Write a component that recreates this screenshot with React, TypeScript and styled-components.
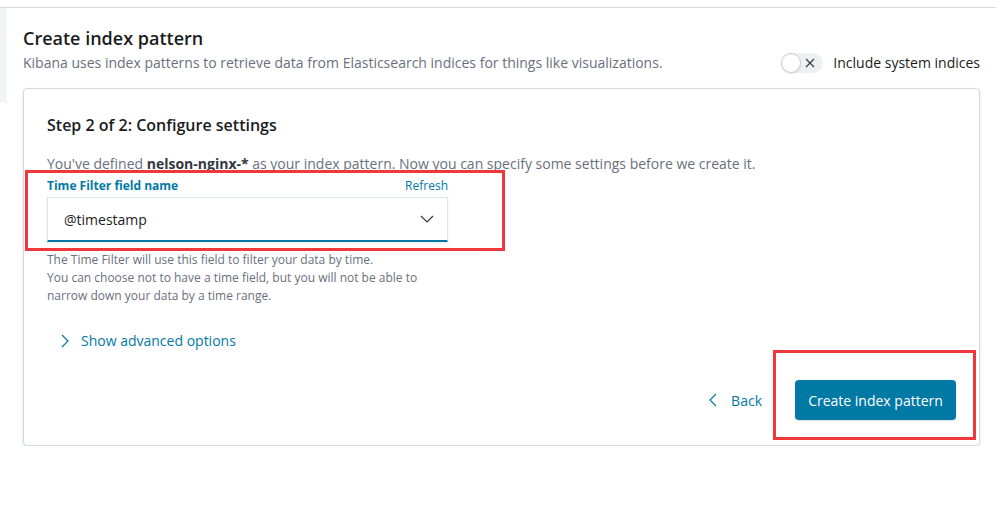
import React, { useState } from "react";
import styled, { createGlobalStyle } from "styled-components";

const GlobalStyle = createGlobalStyle`
  body {
    margin: 0;
    background: #fff;
    font-family: "Open Sans", "Noto Sans", sans-serif;
    color: #1a1c21;
  }
  * { box-sizing: border-box; }
`;

function App() {
  const [includeSystem, setIncludeSystem] = useState(false);

  return (
    <>
      <GlobalStyle />
      <TopBar />
      <Page>
        <SideStrip />
        <Content>
          <Header>
            <HeaderText>
              <Title>Create index pattern</Title>
              <Subtitle>
                Kibana uses index patterns to retrieve data from Elasticsearch
                indices for things like visualizations.
              </Subtitle>
            </HeaderText>
            <SwitchRow onClick={() => setIncludeSystem(!includeSystem)}>
              <Track>
                <Knob />
                <svg width="10" height="10" viewBox="0 0 10 10">
                  <path d="M1 1 L9 9 M9 1 L1 9" stroke="#343741" strokeWidth="1.1" fill="none" />
                </svg>
              </Track>
              <SwitchLabel>Include system indices</SwitchLabel>
            </SwitchRow>
          </Header>

          <Panel>
            <StepTitle>Step 2 of 2: Configure settings</StepTitle>
            <Description>
              You've defined <b>nelson-nginx-*</b> as your index pattern. Now you
              can specify some settings before we create it.
            </Description>

            <Field>
              <LabelRow>
                <FieldLabel>Time Filter field name</FieldLabel>
                <LinkText>Refresh</LinkText>
              </LabelRow>
              <Select>
                <span>@timestamp</span>
                <svg width="14" height="8" viewBox="0 0 14 8">
                  <path d="M1 1 L7 7 L13 1" stroke="#343741" strokeWidth="1.2" fill="none" />
                </svg>
              </Select>
              <HelpText>
                The Time Filter will use this field to filter your data by time.
                <br />
                You can choose not to have a time field, but you will not be able to
                narrow down your data by a time range.
              </HelpText>
              <Highlight style={{ left: 0, top: -4, width: 480, height: 81 }} />
            </Field>

            <Advanced>
              <svg width="8" height="14" viewBox="0 0 8 14">
                <path d="M1 1 L7 7 L1 13" stroke="#0079a5" strokeWidth="1.2" fill="none" />
              </svg>
              <span>Show advanced options</span>
            </Advanced>

            <Footer>
              <BackButton>
                <svg width="8" height="14" viewBox="0 0 8 14">
                  <path d="M7 1 L1 7 L7 13" stroke="#0079a5" strokeWidth="1.2" fill="none" />
                </svg>
                <span>Back</span>
              </BackButton>
              <PrimaryWrap>
                <PrimaryButton>Create index pattern</PrimaryButton>
                <Highlight style={{ left: -22, top: -30, width: 203, height: 90 }} />
              </PrimaryWrap>
            </Footer>
          </Panel>
        </Content>
      </Page>
    </>
  );
}

const TopBar = styled.div`
  height: 8px;
  border-bottom: 1px solid #d3dae6;
`;

const Page = styled.div`
  display: flex;
  align-items: flex-start;
`;

const SideStrip = styled.div`
  width: 7px;
  height: 95px;
  background: #f3f4f6;
  flex-shrink: 0;
`;

const Content = styled.div`
  flex: 1;
  padding: 18px 16px 0 16px;
`;

const Header = styled.div`
  display: flex;
  justify-content: space-between;
  align-items: flex-end;
`;

const HeaderText = styled.div`
  display: flex;
  flex-direction: column;
`;

const Title = styled.h1`
  margin: 0;
  font-size: 18px;
  line-height: 24px;
  font-weight: 600;
  color: #1a1c21;
`;

const Subtitle = styled.p`
  margin: 2px 0 0;
  font-size: 14px;
  line-height: 21px;
  color: #69707d;
`;

const SwitchRow = styled.div`
  display: flex;
  align-items: center;
  gap: 10px;
  cursor: pointer;
  margin-right: 0;
`;

const Track = styled.div`
  width: 42px;
  height: 20px;
  border-radius: 10px;
  background: #eef0f4;
  display: flex;
  align-items: center;
  justify-content: space-between;
  padding: 0 8px 0 0;
`;

const Knob = styled.div`
  width: 20px;
  height: 20px;
  border-radius: 50%;
  background: #fff;
  border: 1px solid #c9ced6;
  box-shadow: 0 1px 2px rgba(0, 0, 0, 0.1);
`;

const SwitchLabel = styled.span`
  font-size: 14px;
  line-height: 20px;
  color: #1a1c21;
`;

const Panel = styled.div`
  position: relative;
  margin-top: 15px;
  border: 1px solid #d3dae6;
  border-radius: 4px;
  box-shadow: 0 1px 3px rgba(0, 0, 0, 0.12);
  padding: 24px 23px 25px 23px;
  background: #fff;
`;

const StepTitle = styled.h2`
  margin: 0;
  font-size: 16px;
  line-height: 24px;
  font-weight: 600;
  color: #1a1c21;
`;

const Description = styled.p`
  margin: 17px 0 0;
  font-size: 14px;
  line-height: 20px;
  color: #69707d;
  b {
    color: #343741;
    font-weight: 700;
  }
`;

const Field = styled.div`
  position: relative;
  margin-left: -22px;
  padding-left: 22px;
`;

const LabelRow = styled.div`
  display: flex;
  justify-content: space-between;
  align-items: center;
  width: 401px;
  height: 22px;
`;

const FieldLabel = styled.span`
  font-size: 12px;
  font-weight: 700;
  color: #0079a5;
`;

const LinkText = styled.span`
  font-size: 12px;
  color: #0079a5;
  cursor: pointer;
`;

const Select = styled.div`
  width: 401px;
  height: 45px;
  margin-top: 1px;
  border: 1px solid #dfe3ea;
  border-bottom: 2px solid #0079a5;
  background: #fff;
  box-shadow: 0 1px 2px rgba(0, 0, 0, 0.08);
  display: flex;
  align-items: center;
  justify-content: space-between;
  padding: 0 13px 0 16px;
  font-size: 14px;
  color: #1a1c21;
`;

const HelpText = styled.p`
  margin: 9px 0 0;
  font-size: 12px;
  line-height: 18px;
  color: #69707d;
  width: 401px;
`;

const Highlight = styled.div`
  position: absolute;
  border: 3px solid #f0373b;
  pointer-events: none;
`;

const Advanced = styled.div`
  display: flex;
  align-items: center;
  gap: 12px;
  margin-top: 26px;
  padding-left: 14px;
  font-size: 14px;
  color: #0079a5;
  cursor: pointer;
`;

const Footer = styled.div`
  display: flex;
  justify-content: flex-end;
  align-items: center;
  gap: 33px;
  margin-top: 30px;
`;

const BackButton = styled.div`
  display: flex;
  align-items: center;
  gap: 14px;
  font-size: 14px;
  color: #0079a5;
  cursor: pointer;
`;

const PrimaryWrap = styled.div`
  position: relative;
`;

const PrimaryButton = styled.button`
  height: 40px;
  width: 161px;
  border: none;
  border-radius: 4px;
  background: #0079a5;
  color: #fff;
  font-family: "Open Sans", "Noto Sans", sans-serif;
  font-size: 14px;
  box-shadow: 0 1px 2px rgba(0, 0, 0, 0.15);
  cursor: pointer;
`;

export default App;
